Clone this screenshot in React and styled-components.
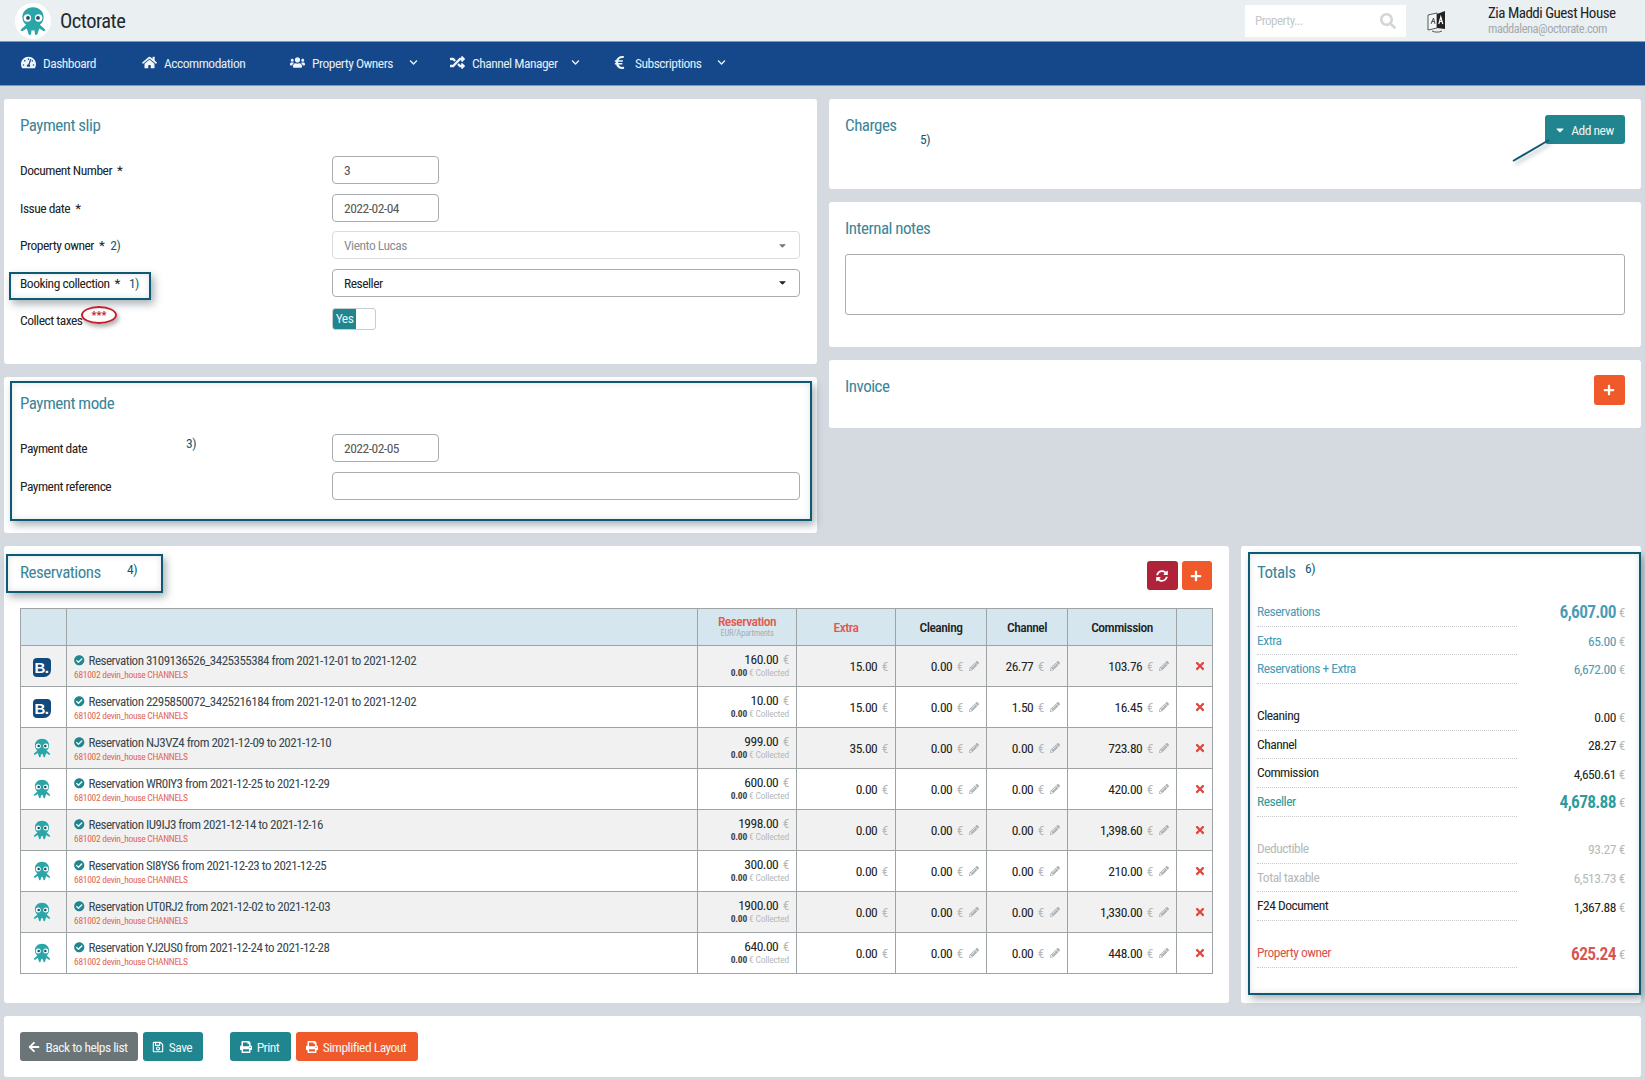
import React from "react"
import styled, { createGlobalStyle } from "styled-components"
import {
  FaArrowLeft, FaCaretDown, FaCheckCircle, FaChevronDown, FaEuroSign, FaHome, FaPencilAlt, FaPlus,
  FaPrint, FaRandom, FaRegSave, FaSearch, FaSyncAlt, FaTachometerAlt, FaTimes, FaUsers,
} from "react-icons/fa"

const teal = "#20858f"
const ink = "#0e5a72"

const GlobalStyle = createGlobalStyle`
  html, body { margin: 0; padding: 0; background: #d5dae1; }
  body {
    font-family: "Roboto Condensed", "Liberation Sans Narrow", Lato, sans-serif;
    font-size: 13.5px;
    letter-spacing: -0.5px;
    color: #222;
  }
  * { box-sizing: border-box; }
`

const Page = styled.div`
  width: 1645px;
  height: 1080px;
  overflow: hidden;
  position: relative;
`

const TopBar = styled.header`
  height: 41px;
  background: #eaeff2;
  display: flex;
  align-items: center;
  padding-left: 15px;
`
const LogoDisc = styled.div`
  width: 36px;
  height: 36px;
  border-radius: 50%;
  background: #fff;
  display: flex;
  align-items: center;
  justify-content: center;
`
const Brand = styled.span`
  font-size: 20.5px;
  margin-left: 9px;
  color: #1d2a30;
`
const Search = styled.div`
  margin-left: auto;
  width: 161px;
  height: 32px;
  background: #fff;
  display: flex;
  align-items: center;
  justify-content: space-between;
  padding: 0 10px;
  color: #c4c8ca;
  font-size: 13px;
  svg { font-size: 16px; color: #d2d5d6; }
`
const LangIcon = styled.svg`
  margin-left: 20px;
  width: 22px;
  height: 24px;
`
const UserBox = styled.div`
  width: 157px;
  margin-left: 40px;
  line-height: 16px;
`
const UserName = styled.div`
  font-size: 15px;
  color: #222;
`
const UserMail = styled.div`
  font-size: 12.5px;
  color: #a4abaf;
`

const NavBar = styled.nav`
  height: 45px;
  background: #14488a;
  border-top: 1px solid #5fa7c7;
  border-bottom: 1px solid #5fa7c7;
  display: flex;
  align-items: center;
  padding: 0 0 2px 21px;
`
const NavItem = styled.div`
  display: flex;
  align-items: center;
  width: ${p => p.$w}px;
  color: #e4ecf4;
  font-size: 13.5px;
  > svg:first-child { font-size: 15px; margin-right: ${p => p.$gap || 7}px; color: #f1f4f8; }
`
const NavChevron = styled(FaChevronDown)`
  font-size: 9px;
  margin-left: ${p => p.$ml || 14}px;
`

const Content = styled.main`
  padding: 13px 4px 0;
  display: flex;
  flex-direction: column;
  gap: 13px;
`
const Columns = styled.div`
  display: grid;
  grid-template-columns: ${p => p.$cols};
  gap: 12px;
`
const Stack = styled.div`
  display: flex;
  flex-direction: column;
  gap: 13px;
`
const Panel = styled.section`
  position: relative;
  background: #fff;
  border-radius: 3px;
  height: ${p => p.$h}px;
  padding: 15px 16px;
`
const Title = styled.h2`
  margin: -1px 0 1px;
  font-size: 17px;
  font-weight: 400;
  line-height: 24px;
  letter-spacing: -0.5px;
  color: #3a8598;
`
const HeadRow = styled.div`
  display: flex;
  align-items: flex-start;
  justify-content: space-between;
`
const Form = styled.div`
  display: flex;
  flex-direction: column;
  gap: 9.5px;
  margin-top: ${p => p.$top}px;
`
const Row = styled.div`
  display: grid;
  grid-template-columns: 312px 1fr;
  align-items: center;
  min-height: 28px;
`
const Label = styled.label`
  color: #222;
`
const Star = styled.span`
  margin-left: 5px;
`
const Note = styled.span`
  color: ${ink};
  margin-left: ${p => p.$gap || 6}px;
`
const Field = styled.div`
  height: 28px;
  width: ${p => (p.$short ? "107px" : "468px")};
  border: 1px solid ${p => (p.$muted ? "#d9dcdf" : "#a9adb0")};
  border-radius: 4px;
  padding: 0 11px;
  display: flex;
  align-items: center;
  justify-content: space-between;
  color: ${p => (p.$muted ? "#8b9094" : p.$dark ? "#222" : "#555")};
  svg { font-size: 11px; color: ${p => (p.$muted ? "#777" : "#222")}; }
`
const Toggle = styled.div`
  width: 44px;
  height: 22px;
  margin-top: -2px;
  border: 1px solid #c9cccf;
  border-radius: 3px;
  overflow: hidden;
`
const ToggleOn = styled.div`
  width: 23px;
  height: 100%;
  background: ${teal};
  color: #e7f3f4;
  line-height: 19px;
  text-align: center;
`

// annotations someone drew on top of the screenshot
const MarkBox = styled.div`
  position: absolute;
  left: ${p => p.$x}px;
  top: ${p => p.$y}px;
  width: ${p => p.$w}px;
  height: ${p => p.$h}px;
  border: 2px solid ${ink};
  box-shadow: 3px 4px 8px rgba(40, 60, 70, 0.4), inset 0 0 6px rgba(40, 60, 70, 0.15);
  pointer-events: none;
`
const MarkText = styled.span`
  position: absolute;
  left: ${p => p.$x}px;
  top: ${p => p.$y}px;
  color: ${ink};
`
const RedOval = styled.div`
  position: absolute;
  left: 77px;
  top: 207px;
  width: 36px;
  height: 18px;
  border: 2px solid #c4202c;
  border-radius: 50%;
  box-shadow: 2px 3px 4px rgba(60, 60, 60, 0.4);
  color: #c4202c;
  font-size: 11px;
  font-weight: 700;
  letter-spacing: 0;
  line-height: 15px;
  text-align: center;
`
const Arrow = styled.svg`
  position: absolute;
  left: 684px;
  top: 38px;
  width: 40px;
  height: 26px;
  overflow: visible;
  filter: drop-shadow(2px 3px 2px rgba(40, 60, 70, 0.4));
`

const Button = styled.button`
  height: ${p => p.$h || 29}px;
  width: ${p => p.$w}px;
  margin-left: ${p => p.$ml || 0}px;
  margin-top: ${p => p.$mt || 0}px;
  border: 0;
  border-radius: 3px;
  background: ${p => p.$bg || teal};
  color: #eef6f6;
  font: inherit;
  letter-spacing: inherit;
  display: inline-flex;
  align-items: center;
  justify-content: center;
  gap: 5px;
  padding: 0 2px 0 0;
  svg { font-size: 12px; color: #fff; }
`
const ButtonGroup = styled.div`
  display: flex;
  gap: 4px;
  margin-right: 1px;
`

const Notes = styled.div`
  margin-top: 14px;
  height: 61px;
  border: 1px solid #a9adb0;
  border-radius: 3px;
`

const Table = styled.table`
  width: 1192px;
  margin-top: 18px;
  table-layout: fixed;
  border-collapse: collapse;
  th, td { border: 1px solid #9ea3a6; }
  th { height: 37px; background: #d5e6ee; color: #222; font-weight: 500; }
  td { height: 41px; }
  tbody tr:nth-child(odd) td { background: #f1f1f1; }
`
const RedHead = styled.th`
  && { color: #e2574c; }
  line-height: 12px;
`
const HeadSub = styled.div`
  font-size: 8.5px;
  font-weight: 400;
  letter-spacing: -0.2px;
  color: #a9adb0;
`
const ChannelCell = styled.td`
  text-align: center;
  vertical-align: middle;
  padding: 3px 4px 0 0;
`
const BookingMark = styled.span`
  display: inline-block;
  width: 18px;
  height: 19px;
  border-radius: 4px 4px 7px 4px;
  background: #0f4a7e;
  color: #fff;
  font-family: "Liberation Sans", sans-serif;
  font-size: 15px;
  font-weight: 700;
  line-height: 19px;
`
const ResCell = styled.td`
  padding: 3px 0 0 7px;
  line-height: 14px;
`
const ResTitle = styled.div`
  font-size: 13px;
  color: #37474f;
  display: flex;
  align-items: center;
  gap: 4px;
  svg { font-size: 10.5px; color: ${teal}; }
`
const ResSub = styled.div`
  font-size: 9.5px;
  letter-spacing: -0.3px;
  color: #e2664f;
`
const NumCell = styled.td`
  text-align: right;
  padding: 0 7px;
  font-size: 13.5px;
  color: #222;
  line-height: 13px;
  svg { font-size: 10px; color: #aeb2b4; margin-left: 6px; }
`
const Euro = styled.span`
  color: #b5b9bb;
  margin-left: 2px;
`
const Collected = styled.div`
  font-size: 9.5px;
  letter-spacing: -0.2px;
  color: #b5b9bb;
  b { color: #444; }
`
const DelCell = styled.td`
  text-align: center;
  color: #e2453c;
  font-size: 12px;
  padding: 2px 0 0 11px;
`

const TotalGroup = styled.div`
  margin-top: ${p => p.$top}px;
`
const TotalRow = styled.div`
  height: 28.6px;
  display: flex;
  align-items: center;
  color: ${p => p.$color};
`
const TotalName = styled.div`
  width: 260px;
  height: 100%;
  line-height: 27px;
  border-bottom: 1px dotted #c5c9cb;
`
const TotalValue = styled.div`
  margin-left: auto;
  margin-right: 1px;
  font-size: ${p => (p.$big ? "17.5px" : "13.5px")};
  font-weight: ${p => (p.$big ? 600 : 400)};
  letter-spacing: ${p => (p.$big ? "-0.7px" : "-0.5px")};
  color: ${p => p.$color};
`

const Footer = styled.footer`
  background: #fff;
  border-radius: 3px;
  height: 61px;
  padding: 16px 16px;
  display: flex;
  gap: 5px;
`

const Octopus = ({ size, color = "#2aa5a8" }) => (
  <svg width={size} height={size} viewBox="0 0 24 24" fill="none">
    <path d="M12 1c5 0 8.500 3.500 8.500 8 0 3-1.500 5-3 6l4 3.500c.8.800-.2 2-1.200 1.500L17 18l-1.500 4.500c-.4 1-1.800.800-1.900-.2L13 19l-1 1-1-1-.6 3.300c-.1 1-1.500 1.200-1.900.2L7 18l-3.300 2c-1 .5-2-.7-1.200-1.500l4-3.500c-1.500-1-3-3-3-6 0-4.500 3.500-8 8.500-8z" fill={color} />
    <circle cx="7.500" cy="9.500" r="3" fill="#fff" />
    <circle cx="16.500" cy="9.500" r="3" fill="#fff" />
    <circle cx="8" cy="9.500" r="1.500" fill="#174f5c" />
    <circle cx="16" cy="9.500" r="1.500" fill="#174f5c" />
  </svg>
)

const reservations = [
  ["B", "3109136526_3425355384", "2021-12-01", "2021-12-02", "160.00", "15.00", "26.77", "103.76"],
  ["B", "2295850072_3425216184", "2021-12-01", "2021-12-02", "10.00", "15.00", "1.50", "16.45"],
  ["O", "NJ3VZ4", "2021-12-09", "2021-12-10", "999.00", "35.00", "0.00", "723.80"],
  ["O", "WR0IY3", "2021-12-25", "2021-12-29", "600.00", "0.00", "0.00", "420.00"],
  ["O", "IU9IJ3", "2021-12-14", "2021-12-16", "1998.00", "0.00", "0.00", "1,398.60"],
  ["O", "SI8YS6", "2021-12-23", "2021-12-25", "300.00", "0.00", "0.00", "210.00"],
  ["O", "UT0RJ2", "2021-12-02", "2021-12-03", "1900.00", "0.00", "0.00", "1,330.00"],
  ["O", "YJ2US0", "2021-12-24", "2021-12-28", "640.00", "0.00", "0.00", "448.00"],
]

const totals = [
  { top: 14, rows: [
    ["Reservations", "6,607.00", "#4a9ab5", true],
    ["Extra", "65.00", "#4a9ab5"],
    ["Reservations + Extra", "6,672.00", "#4a9ab5"],
  ] },
  { top: 18.5, rows: [
    ["Cleaning", "0.00", "#222"],
    ["Channel", "28.27", "#222"],
    ["Commission", "4,650.61", "#222"],
    ["Reseller", "4,678.88", "#2a9a9c", true],
  ] },
  { top: 18.5, rows: [
    ["Deductible", "93.27", "#b5b9bb"],
    ["Total taxable", "6,513.73", "#b5b9bb"],
    ["F24 Document", "1,367.88", "#222"],
  ] },
  { top: 18.5, rows: [["Property owner", "625.24", "#d9534f", true]] },
]

const Money = ({ value }) => <>{value} <Euro>€</Euro></>

export default function App() {
  return (
    <Page>
      <GlobalStyle />
      <TopBar>
        <LogoDisc><Octopus size={30} /></LogoDisc>
        <Brand>Octorate</Brand>
        <Search>Property... <FaSearch /></Search>
        <LangIcon viewBox="0 0 22 24">
          <path d="M2 6l9-2v15l-9 2z" fill="#f4f6f7" stroke="#333" strokeWidth=".8" />
          <path d="M11 5l8-3v18l-8-1z" fill="#222" />
          <path d="M5 15l2.500-6 1.500 6M5.500 12.500h3" stroke="#444" strokeWidth=".9" fill="none" />
          <path d="M12.800 15l2-7 2 7M13.700 12.500h2.200" stroke="#fff" strokeWidth="1.200" fill="none" />
          <path d="M6 22c3 1.500 7 1.500 10 0" stroke="#333" strokeWidth=".8" fill="none" />
        </LangIcon>
        <UserBox>
          <UserName>Zia Maddi Guest House</UserName>
          <UserMail>maddalena@octorate.com</UserMail>
        </UserBox>
      </TopBar>

      <NavBar>
        <NavItem $w={121}><FaTachometerAlt />Dashboard</NavItem>
        <NavItem $w={148}><FaHome />Accommodation</NavItem>
        <NavItem $w={160}><FaUsers />Property Owners<NavChevron $ml={16} /></NavItem>
        <NavItem $w={162}><FaRandom />Channel Manager<NavChevron $ml={13} /></NavItem>
        <NavItem $w={140} $gap={8}><FaEuroSign />Subscriptions<NavChevron $ml={15} /></NavItem>
      </NavBar>

      <Content>
        <Columns $cols="813px 812px">
          <Stack>
            <Panel $h={265}>
              <Title>Payment slip</Title>
              <Form $top={19}>
                <Row><Label>Document Number<Star>*</Star></Label><Field $short>3</Field></Row>
                <Row><Label>Issue date<Star>*</Star></Label><Field $short>2022-02-04</Field></Row>
                <Row><Label>Property owner<Star>*</Star><Note>2)</Note></Label><Field $muted>Viento Lucas <FaCaretDown /></Field></Row>
                <Row><Label>Booking collection<Star>*</Star><Note $gap={9}>1)</Note></Label><Field $dark>Reseller <FaCaretDown /></Field></Row>
                <Row><Label>Collect taxes</Label><Toggle><ToggleOn>Yes</ToggleOn></Toggle></Row>
              </Form>
              <MarkBox $x={5} $y={173} $w={142} $h={28} />
              <RedOval>***</RedOval>
            </Panel>
            <Panel $h={156}>
              <Title>Payment mode</Title>
              <Form $top={19}>
                <Row><Label>Payment date</Label><Field $short>2022-02-05</Field></Row>
                <Row><Label>Payment reference</Label><Field /></Row>
              </Form>
              <MarkText $x={182} $y={58}>3)</MarkText>
              <MarkBox $x={6} $y={4} $w={802} $h={140} />
            </Panel>
          </Stack>
          <Stack>
            <Panel $h={90}>
              <HeadRow>
                <Title>Charges</Title>
                <Button $w={80} $mt={1}><FaCaretDown />Add new</Button>
              </HeadRow>
              <MarkText $x={91} $y={32}>5)</MarkText>
              <Arrow viewBox="0 0 40 26"><path d="M0 24L36 3" stroke={ink} strokeWidth="2" /></Arrow>
            </Panel>
            <Panel $h={145}>
              <Title>Internal notes</Title>
              <Notes />
            </Panel>
            <Panel $h={68}>
              <HeadRow>
                <Title>Invoice</Title>
                <Button $w={31} $h={30} $bg="#f05a2b"><FaPlus /></Button>
              </HeadRow>
            </Panel>
          </Stack>
        </Columns>

        <Columns $cols="1225px 400px">
          <Panel $h={457}>
            <HeadRow>
              <Title>Reservations</Title>
              <ButtonGroup>
                <Button $w={31} $bg="#b0223a"><FaSyncAlt /></Button>
                <Button $w={30} $bg="#f05a2b"><FaPlus /></Button>
              </ButtonGroup>
            </HeadRow>
            <MarkText $x={123} $y={15}>4)</MarkText>
            <MarkBox $x={2} $y={8} $w={157} $h={39} />
            <Table>
              <colgroup>
                {[46, 631, 99, 99, 91, 81, 109, 36].map((w, i) => <col key={i} width={w} />)}
              </colgroup>
              <thead>
                <tr>
                  <th /><th />
                  <RedHead>Reservation<HeadSub>EUR/Apartments</HeadSub></RedHead>
                  <RedHead>Extra</RedHead>
                  <th>Cleaning</th>
                  <th>Channel</th>
                  <th>Commission</th>
                  <th />
                </tr>
              </thead>
              <tbody>
                {reservations.map(([kind, code, from, to, res, extra, channel, commission]) => (
                  <tr key={code}>
                    <ChannelCell>{kind === "B" ? <BookingMark>B.</BookingMark> : <Octopus size={20} />}</ChannelCell>
                    <ResCell>
                      <ResTitle><FaCheckCircle />Reservation {code} from {from} to {to}</ResTitle>
                      <ResSub>681002 devin_house CHANNELS</ResSub>
                    </ResCell>
                    <NumCell>
                      <Money value={res} />
                      <Collected><b>0.00</b> € Collected</Collected>
                    </NumCell>
                    <NumCell><Money value={extra} /></NumCell>
                    <NumCell><Money value="0.00" /><FaPencilAlt /></NumCell>
                    <NumCell><Money value={channel} /><FaPencilAlt /></NumCell>
                    <NumCell><Money value={commission} /><FaPencilAlt /></NumCell>
                    <DelCell><FaTimes /></DelCell>
                  </tr>
                ))}
              </tbody>
            </Table>
          </Panel>
          <Panel $h={457}>
            <Title>Totals</Title>
            {totals.map((group, i) => (
              <TotalGroup key={i} $top={group.top}>
                {group.rows.map(([name, value, color, big]) => (
                  <TotalRow key={name} $color={color}>
                    <TotalName>{name}</TotalName>
                    <TotalValue $big={big} $color={color}>{value}</TotalValue>
                    <Euro>€</Euro>
                  </TotalRow>
                ))}
              </TotalGroup>
            ))}
            <MarkText $x={64} $y={14}>6)</MarkText>
            <MarkBox $x={7} $y={6} $w={393} $h={443} />
          </Panel>
        </Columns>

        <Footer>
          <Button $w={118} $bg="#6b7476"><FaArrowLeft />Back to helps list</Button>
          <Button $w={60}><FaRegSave />Save</Button>
          <Button $w={61} $ml={22}><FaPrint />Print</Button>
          <Button $w={122} $bg="#f05a2b"><FaPrint />Simplified Layout</Button>
        </Footer>
      </Content>
    </Page>
  )
}
